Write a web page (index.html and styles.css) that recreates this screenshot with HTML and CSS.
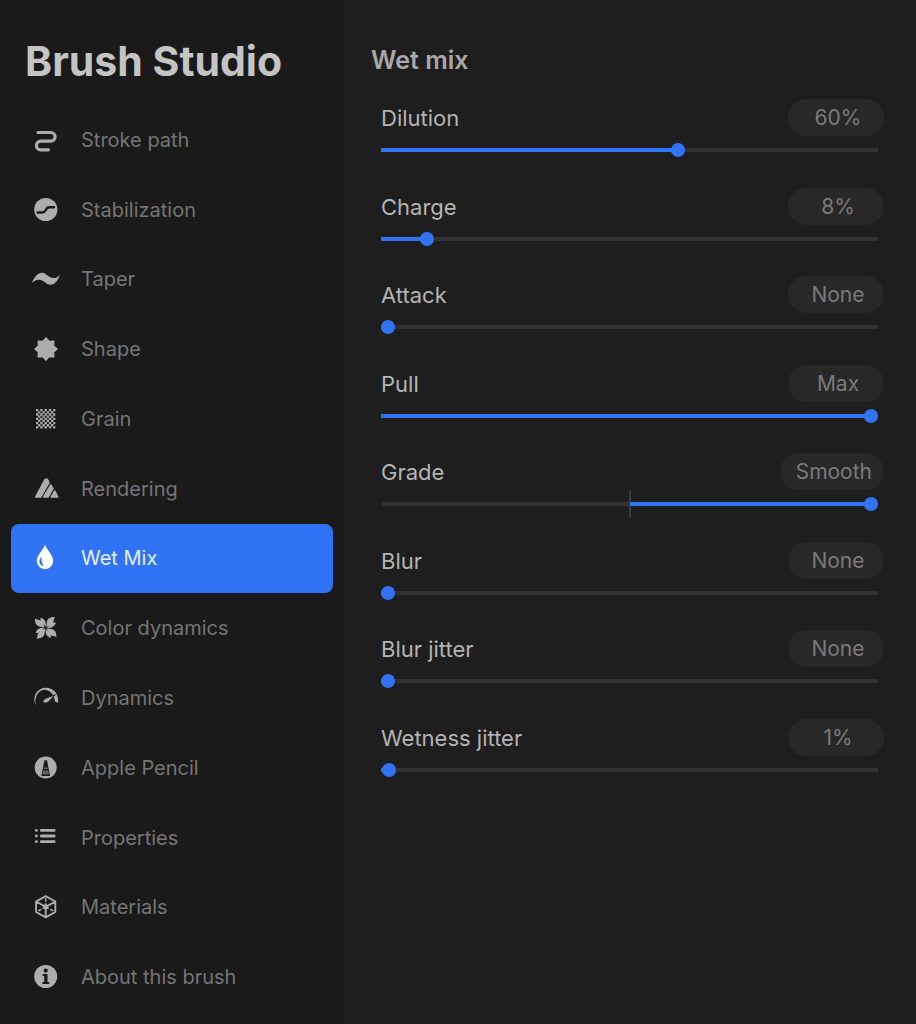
FILE: index.html
```
<!DOCTYPE html>
<html lang="en">
<head>
<meta charset="utf-8">
<meta name="viewport" content="width=device-width, initial-scale=1">
<title>Brush Studio</title>
<link rel="stylesheet" href="styles.css">
</head>
<body>
<div class="studio">
  <aside class="sidebar">
    <h1 class="title">Brush Studio</h1>
    <nav class="nav" aria-label="Brush attributes">
      <button class="nav-item" type="button">
        <svg class="icon" viewBox="0 0 32 32" aria-hidden="true"><path class="line round" stroke-width="3.200" d="M8 8.500H20.800a4.300 4.300 0 0 1 0 8.600H10.800a4.300 4.300 0 0 0 0 8.700H18.500"/></svg>
        <span>Stroke path</span>
      </button>
      <button class="nav-item" type="button">
        <svg class="icon" viewBox="0 0 32 32" aria-hidden="true"><circle cx="15.800" cy="15.500" r="11.600"/><path class="cut round" stroke-width="2.400" d="M7.600 18.500H12.500C16.500 18.500 15 13.300 19.500 13.300H24"/></svg>
        <span>Stabilization</span>
      </button>
      <button class="nav-item" type="button">
        <svg class="icon" viewBox="0 0 32 32" aria-hidden="true"><path d="M1.800 19.800C6 10.500 11.500 7.500 16.500 11.800C21 15.500 25.500 17 30.200 11.500C27 20.500 21.500 24.500 15.500 19.800C11 16.200 7 15.500 1.800 19.800Z"/></svg>
        <span>Taper</span>
      </button>
      <button class="nav-item" type="button">
        <svg class="icon" viewBox="0 0 32 32" aria-hidden="true"><polygon class="soft" points="27,16 23.400,19.100 23.800,23.800 19.100,23.400 16,27 12.900,23.400 8.200,23.800 8.600,19.100 5,16 8.600,12.900 8.200,8.200 12.900,8.600 16,5 19.100,8.600 23.800,8.200 23.400,12.900"/></svg>
        <span>Shape</span>
      </button>
      <button class="nav-item" type="button">
        <svg class="icon" viewBox="0 0 32 32" aria-hidden="true"><path class="line" stroke-width="2.300" stroke-dasharray="2.300 2" d="M6 7.200H25.350M6 11.500H25.350M6 15.800H25.350M6 20.100H25.350M6 24.400H25.350M8.150 9.350H23.300M8.150 13.650H23.300M8.150 17.950H23.300M8.150 22.250H23.300"/></svg>
        <span>Grain</span>
      </button>
      <button class="nav-item" type="button">
        <svg class="icon" viewBox="0 0 32 32" aria-hidden="true"><path class="soft" d="M5.600 24L15.200 6.200H17.200L19 9.600L10.800 24ZM13.600 24L20.800 12L23 15.600L18.200 24ZM21.200 24L24.800 18L27.800 24Z"/></svg>
        <span>Rendering</span>
      </button>
      <button class="nav-item active" type="button" aria-current="page">
        <svg class="icon" viewBox="0 0 32 32" aria-hidden="true"><path d="M15 3C17.500 8.500 23.200 13.500 23.200 19A8.200 8.200 0 0 1 6.800 19C6.800 13.500 12.500 8.500 15 3Z"/><path class="shine" d="M11.600 14.500C8 18.500 9 23.600 14 24C11.700 21.500 11.200 18.500 11.600 14.500Z"/></svg>
        <span>Wet Mix</span>
      </button>
      <button class="nav-item" type="button">
        <svg class="icon" viewBox="0 0 32 32" aria-hidden="true">
          <defs><g id="blade"><path d="M.5-.8L1.100-5.500C1.800-9.500 4.500-10.800 9.300-10.700C7.800-9 8.600-6 6.600-4C5-2.500 2.800-2 .5-.8Z"/><path d="M-.1-1.200L-1.400-2.800C-4.600-4.400-5.800-7-5-10.200C-1.800-9 1-6 -.1-1.200Z"/></g></defs>
          <g transform="translate(15.700 15.800)"><use href="#blade"/><use href="#blade" transform="rotate(90)"/><use href="#blade" transform="rotate(180)"/><use href="#blade" transform="rotate(270)"/></g>
        </svg>
        <span>Color dynamics</span>
      </button>
      <button class="nav-item" type="button">
        <svg class="icon" viewBox="0 0 32 32" aria-hidden="true"><path d="M5.600 23.200C2 14 7.500 5.800 16 5.800C23 5.800 28.500 11.500 28.200 19.300C28 20.900 25.500 20.800 25 19.300C24 13 21 8.600 16 7.900C9 7.200 4.200 14 5.600 23.200Z"/><path class="needle" d="M25.400 12.600L18.500 20C15.500 22.600 11.300 20.300 13.600 17.700C15.600 15.600 20.500 15 25.400 12.600Z"/></svg>
        <span>Dynamics</span>
      </button>
      <button class="nav-item" type="button">
        <svg class="icon" viewBox="0 0 32 32" aria-hidden="true"><circle cx="15.700" cy="15.500" r="11"/><path class="hole" d="M14.400 8.200H17L20 24H11.400Z"/><path d="M13.800 15.600H17.600L17.900 17H13.500ZM13.200 18.400H18.200L18.800 22.600H12.600Z" opacity=".5"/></svg>
        <span>Apple Pencil</span>
      </button>
      <button class="nav-item" type="button">
        <svg class="icon" viewBox="0 0 32 32" aria-hidden="true"><path class="line round" stroke-width="2.800" d="M6.300 8.400h.1M6.300 14h.1M6.300 19.700h.1M11.300 8.400H24.200M11.300 14H24.200M11.300 19.700H24.200"/></svg>
        <span>Properties</span>
      </button>
      <button class="nav-item" type="button">
        <svg class="icon" viewBox="0 0 32 32" aria-hidden="true"><path class="line round" stroke-width="1.900" d="M15.700 5.200L25.300 10.500V21L15.700 26.400L6.100 21V10.500ZM6.100 10.500L15.700 15.800L25.300 10.500M15.700 15.800V26.400"/><path class="line" stroke-width="1.500" stroke-dasharray="3.500 1.600" d="M15.700 15.800V6M15.700 15.800L6.800 20.700M15.700 15.800L24.600 20.700"/><circle cx="15.700" cy="15.800" r="2.500"/></svg>
        <span>Materials</span>
      </button>
      <button class="nav-item" type="button">
        <svg class="icon" viewBox="0 0 32 32" aria-hidden="true"><circle cx="15.700" cy="15.500" r="11.500"/><circle class="hole" cx="15.700" cy="9.600" r="2.100"/><path class="hole" d="M12.600 13H17.500V21H19.200V23.100H12.400V21H14.200V15H12.600Z"/></svg>
        <span>About this brush</span>
      </button>
    </nav>
  </aside>
  <main class="panel">
    <h2 class="heading">Wet mix</h2>
    <div class="settings">
      <div class="setting">
        <label class="label" for="dilution">Dilution</label>
        <button class="value" type="button">60%</button>
        <div class="track"><input class="slider" id="dilution" type="range" value="60" style="--to:.6"></div>
      </div>
      <div class="setting">
        <label class="label" for="charge">Charge</label>
        <button class="value" type="button">8%</button>
        <div class="track"><input class="slider" id="charge" type="range" value="8" style="--to:.08"></div>
      </div>
      <div class="setting">
        <label class="label" for="attack">Attack</label>
        <button class="value" type="button">None</button>
        <div class="track"><input class="slider" id="attack" type="range" value="0" style="--to:0"></div>
      </div>
      <div class="setting">
        <label class="label" for="pull">Pull</label>
        <button class="value" type="button">Max</button>
        <div class="track"><input class="slider" id="pull" type="range" value="100" style="--to:1"></div>
      </div>
      <div class="setting">
        <label class="label" for="grade">Grade</label>
        <button class="value" type="button">Smooth</button>
        <div class="track centered"><input class="slider" id="grade" type="range" min="-100" max="100" value="100" style="--from:50%;--to:1"></div>
      </div>
      <div class="setting">
        <label class="label" for="blur">Blur</label>
        <button class="value" type="button">None</button>
        <div class="track"><input class="slider" id="blur" type="range" value="0" style="--to:0"></div>
      </div>
      <div class="setting">
        <label class="label" for="blur-jitter">Blur jitter</label>
        <button class="value" type="button">None</button>
        <div class="track"><input class="slider" id="blur-jitter" type="range" value="0" style="--to:0"></div>
      </div>
      <div class="setting">
        <label class="label" for="wetness-jitter">Wetness jitter</label>
        <button class="value" type="button">1%</button>
        <div class="track"><input class="slider" id="wetness-jitter" type="range" min="0" max="100" step="any" value="0.2" style="--to:.002"></div>
      </div>
    </div>
  </main>
</div>
</body>
</html>
```
FILE: styles.css
```
:root {
  --side: #1a1a1a;
  --panel: #1e1e1e;
  --blue: #3074f5;
  --glyph: #adadad;
}

* {
  box-sizing: border-box;
}

body {
  margin: 0;
  background: var(--panel);
  font-family: Inter, "Liberation Sans", sans-serif;
}

button {
  border: 0;
  background: none;
  font: inherit;
  cursor: pointer;
}

.studio {
  display: grid;
  grid-template-columns: 343px 1fr;
  min-height: 100vh;
}

.sidebar {
  display: flex;
  flex-direction: column;
  padding: 36px 10px 12px 11px;
  background: var(--side);
}

.title {
  margin: 0;
  padding-left: 14px;
  color: #c4c4c4;
  font-size: 41px;
  font-weight: 700;
  line-height: 50px;
}

.nav {
  display: grid;
  flex: 1;
  grid-auto-rows: 1fr;
  margin-top: 19px;
}

.nav-item {
  display: flex;
  align-items: center;
  gap: 19px;
  min-height: 48px;
  padding: 0 19px;
  border-radius: 8px;
  color: #757575;
  font-size: 20px;
  line-height: 24px;
  text-align: left;
}

.nav-item.active {
  background: var(--blue);
  color: #e6f0ff;
}

.icon {
  flex: none;
  width: 32px;
  height: 32px;
  fill: var(--glyph);
}

.active .icon {
  fill: #fff;
}

.line {
  fill: none;
  stroke: var(--glyph);
}

.round {
  stroke-linecap: round;
  stroke-linejoin: round;
}

.soft {
  stroke: var(--glyph);
  stroke-width: 1.5;
  stroke-linejoin: round;
}

.cut {
  fill: none;
  stroke: var(--side);
}

.hole {
  fill: var(--side);
}

.shine {
  fill: var(--blue);
}

.needle {
  stroke: var(--side);
  stroke-width: 1;
}

.panel {
  padding: 44px 32px 32px 28px;
}

.heading {
  margin: 0;
  color: #a8a8a8;
  font-size: 25px;
  font-weight: 600;
  line-height: 32px;
}

.settings {
  display: grid;
  grid-auto-rows: 1fr;
  min-height: 708px;
  margin-top: 23px;
  padding-left: 10px;
}

.setting {
  display: grid;
  grid-template-columns: 1fr auto;
  align-content: start;
  align-items: center;
}

.label {
  padding-top: 1px;
  color: #b4b4b4;
  font-size: 22px;
  line-height: 36px;
}

.value {
  min-width: 96px;
  height: 37px;
  padding: 0 12px 0 16px;
  border-radius: 19px;
  background: #282828;
  color: #7a7a7a;
  font-size: 21px;
  line-height: 37px;
}

.track {
  position: relative;
  grid-column: 1 / -1;
  display: flex;
  align-items: center;
  height: 28px;
  margin-right: 6px;
}

.centered::before {
  content: "";
  position: absolute;
  top: 0;
  left: 50%;
  width: 2px;
  height: 28px;
  margin-left: -1px;
  background: #3c3c3c;
}

.slider {
  --from: 0%;
  position: relative;
  width: 100%;
  height: 14px;
  margin: 0;
  appearance: none;
  background: none;
  cursor: pointer;
}

.slider::-webkit-slider-runnable-track {
  --end: calc(7px + (100% - 14px) * var(--to));
  height: 4px;
  background: linear-gradient(to right, #323232 var(--from), var(--blue) var(--from), var(--blue) var(--end), #323232 var(--end));
}

.slider::-webkit-slider-thumb {
  width: 14px;
  height: 14px;
  margin-top: -5px;
  border-radius: 50%;
  appearance: none;
  background: var(--blue);
}
```
